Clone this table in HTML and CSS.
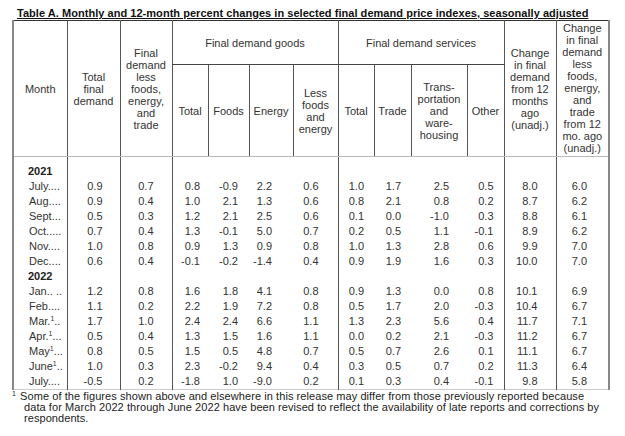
FILE: index.html
```html
<!DOCTYPE html>
<html lang="en">
<head>
  <meta charset="UTF-8" />
  <title>Table A. Final demand price indexes</title>
  <link rel="stylesheet" href="styles.css">
</head>
<body>

<div class="page">
  <h1 class="title">Table A. Monthly and 12-month percent changes in selected final demand price indexes, seasonally adjusted</h1>

  <table class="ppi">
    <colgroup>
      <col style="width:54px"><col style="width:53px"><col style="width:52px">
      <col style="width:36px"><col style="width:41px"><col style="width:44px"><col style="width:45px">
      <col style="width:36px"><col style="width:37px"><col style="width:56px"><col style="width:37px">
      <col style="width:52px"><col style="width:53px">
    </colgroup>
    <thead>
      <tr class="top">
        <th rowspan="2">Month</th>
        <th rowspan="2">Total<br>final<br>demand</th>
        <th rowspan="2">Final<br>demand<br>less<br>foods,<br>energy,<br>and<br>trade</th>
        <th colspan="4" class="group">Final demand goods</th>
        <th colspan="4" class="group">Final demand services</th>
        <th rowspan="2">Change<br>in final<br>demand<br>from 12<br>months<br>ago<br>(unadj.)</th>
        <th rowspan="2" class="tall">Change<br>in final<br>demand<br>less<br>foods,<br>energy,<br>and<br>trade<br>from 12<br>mo. ago<br>(unadj.)</th>
      </tr>
      <tr class="sub">
        <th>Total</th>
        <th>Foods</th>
        <th>Energy</th>
        <th>Less<br>foods<br>and<br>energy</th>
        <th>Total</th>
        <th>Trade</th>
        <th>Trans-<br>portation<br>and<br>ware-<br>housing</th>
        <th>Other</th>
      </tr>
    </thead>
    <tbody>
      <tr class="year first"><td>2021</td><td></td><td></td><td></td><td></td><td></td><td></td><td></td><td></td><td></td><td></td><td></td><td></td></tr>
      <tr><td>July....</td><td>0.9</td><td>0.7</td><td>0.8</td><td>-0.9</td><td>2.2</td><td>0.6</td><td>1.0</td><td>1.7</td><td>2.5</td><td>0.5</td><td>8.0</td><td>6.0</td></tr>
      <tr><td>Aug....</td><td>0.9</td><td>0.4</td><td>1.0</td><td>2.1</td><td>1.3</td><td>0.6</td><td>0.8</td><td>2.1</td><td>0.8</td><td>0.2</td><td>8.7</td><td>6.2</td></tr>
      <tr><td>Sept...</td><td>0.5</td><td>0.3</td><td>1.2</td><td>2.1</td><td>2.5</td><td>0.6</td><td>0.1</td><td>0.0</td><td>-1.0</td><td>0.3</td><td>8.8</td><td>6.1</td></tr>
      <tr><td>Oct.....</td><td>0.7</td><td>0.4</td><td>1.3</td><td>-0.1</td><td>5.0</td><td>0.7</td><td>0.2</td><td>0.5</td><td>1.1</td><td>-0.1</td><td>8.9</td><td>6.2</td></tr>
      <tr><td>Nov....</td><td>1.0</td><td>0.8</td><td>0.9</td><td>1.3</td><td>0.9</td><td>0.8</td><td>1.0</td><td>1.3</td><td>2.8</td><td>0.6</td><td>9.9</td><td>7.0</td></tr>
      <tr><td>Dec....</td><td>0.6</td><td>0.4</td><td>-0.1</td><td>-0.2</td><td>-1.4</td><td>0.4</td><td>0.9</td><td>1.9</td><td>1.6</td><td>0.3</td><td>10.0</td><td>7.0</td></tr>
      <tr class="year"><td>2022</td><td></td><td></td><td></td><td></td><td></td><td></td><td></td><td></td><td></td><td></td><td></td><td></td></tr>
      <tr><td>Jan.. ..</td><td>1.2</td><td>0.8</td><td>1.6</td><td>1.8</td><td>4.1</td><td>0.8</td><td>0.9</td><td>1.3</td><td>0.0</td><td>0.8</td><td>10.1</td><td>6.9</td></tr>
      <tr><td>Feb....</td><td>1.1</td><td>0.2</td><td>2.2</td><td>1.9</td><td>7.2</td><td>0.8</td><td>0.5</td><td>1.7</td><td>2.0</td><td>-0.3</td><td>10.4</td><td>6.7</td></tr>
      <tr><td>Mar.<sup>1</sup>..</td><td>1.7</td><td>1.0</td><td>2.4</td><td>2.4</td><td>6.6</td><td>1.1</td><td>1.3</td><td>2.3</td><td>5.6</td><td>0.4</td><td>11.7</td><td>7.1</td></tr>
      <tr><td>Apr.<sup>1</sup>...</td><td>0.5</td><td>0.4</td><td>1.3</td><td>1.5</td><td>1.6</td><td>1.1</td><td>0.0</td><td>0.2</td><td>2.1</td><td>-0.3</td><td>11.2</td><td>6.7</td></tr>
      <tr><td>May<sup>1</sup>...</td><td>0.8</td><td>0.5</td><td>1.5</td><td>0.5</td><td>4.8</td><td>0.7</td><td>0.5</td><td>0.7</td><td>2.6</td><td>0.1</td><td>11.1</td><td>6.7</td></tr>
      <tr><td>June<sup>1</sup>..</td><td>1.0</td><td>0.3</td><td>2.3</td><td>-0.2</td><td>9.4</td><td>0.4</td><td>0.3</td><td>0.5</td><td>0.7</td><td>0.2</td><td>11.3</td><td>6.4</td></tr>
      <tr class="last"><td>July....</td><td>-0.5</td><td>0.2</td><td>-1.8</td><td>1.0</td><td>-9.0</td><td>0.2</td><td>0.1</td><td>0.3</td><td>0.4</td><td>-0.1</td><td>9.8</td><td>5.8</td></tr>
    </tbody>
  </table>

  <p class="note"><sup>1</sup> Some of the figures shown above and elsewhere in this release may differ from those previously reported because<br>data for March 2022 through June 2022 have been revised to reflect the availability of late reports and corrections by<br>respondents.</p>
</div>

</body>
</html>
```

FILE: styles.css
```css
body {
  margin: 0;
  font-family: "Liberation Sans", Arial, sans-serif;
  color: #222;
  background: #fff;
}

.page {
  padding: 7px 0 0 12px;
}

.title {
  margin: 0 0 0 5px;
  font-size: 11px;
  line-height: 13px;
  font-weight: bold;
  letter-spacing: 0.04px;
  color: #111;
  text-decoration: underline;
  white-space: nowrap;
}

.ppi {
  border-collapse: collapse;
  table-layout: fixed;
  width: 596px;
  font-size: 11px;
  border-left: 2px solid #888;
  border-right: 2px solid #888;
  border-top: 1px solid #333;
  border-bottom: 1px solid #ccc;
}

.ppi th {
  font-weight: normal;
  line-height: 12px;
  color: #333;
  padding: 0;
  vertical-align: middle;
  text-align: center;
  border-left: 1px solid #555;
}

.ppi th.tall {
  vertical-align: top;
  padding-top: 1px;
}

.ppi tr.top {
  height: 44px;
}

.ppi tr.sub {
  height: 92px;
}

.ppi th.group {
  border-bottom: 1px solid #444;
}

.ppi thead tr.sub th,
.ppi thead th[rowspan] {
  border-bottom: 1px solid #bbb;
}

.ppi td {
  height: 15px;
  padding: 0;
  line-height: 15px;
  color: #333;
  text-align: right;
  white-space: nowrap;
}

.ppi tr.first td {
  padding-top: 7px;
}

.ppi td:nth-child(1) {
  text-align: left;
  padding-left: 15px;
}

.ppi td:nth-child(2),
.ppi td:nth-child(3),
.ppi td:nth-child(4),
.ppi td:nth-child(8),
.ppi td:nth-child(12),
.ppi td:nth-child(13) {
  border-left: 1px solid #555;
}

.ppi td:nth-child(2) { padding-right: 17px; }
.ppi td:nth-child(3) { padding-right: 18px; }
.ppi td:nth-child(4) { padding-right: 8px; }
.ppi td:nth-child(5) { padding-right: 11px; }
.ppi td:nth-child(6) { padding-right: 21px; }
.ppi td:nth-child(7) { padding-right: 19px; }
.ppi td:nth-child(8) { padding-right: 10px; }
.ppi td:nth-child(9) { padding-right: 10px; }
.ppi td:nth-child(10) { padding-right: 18px; }
.ppi td:nth-child(11) { padding-right: 10px; }
.ppi td:nth-child(12) { padding-right: 18px; }
.ppi td:nth-child(13) { padding-right: 21px; }

.ppi tr.year td:first-child {
  font-weight: bold;
  padding-left: 14px;
  color: #222;
}

.ppi sup {
  font-size: 7px;
  line-height: 0;
  vertical-align: 4px;
}

.note {
  margin: 1px 0 0;
  padding-left: 12px;
  text-indent: -12px;
  font-size: 11px;
  line-height: 11px;
  letter-spacing: 0.07px;
  color: #222;
  white-space: nowrap;
}

.note sup {
  font-size: 7px;
  line-height: 0;
  vertical-align: 4px;
  margin-right: 1px;
}
```
